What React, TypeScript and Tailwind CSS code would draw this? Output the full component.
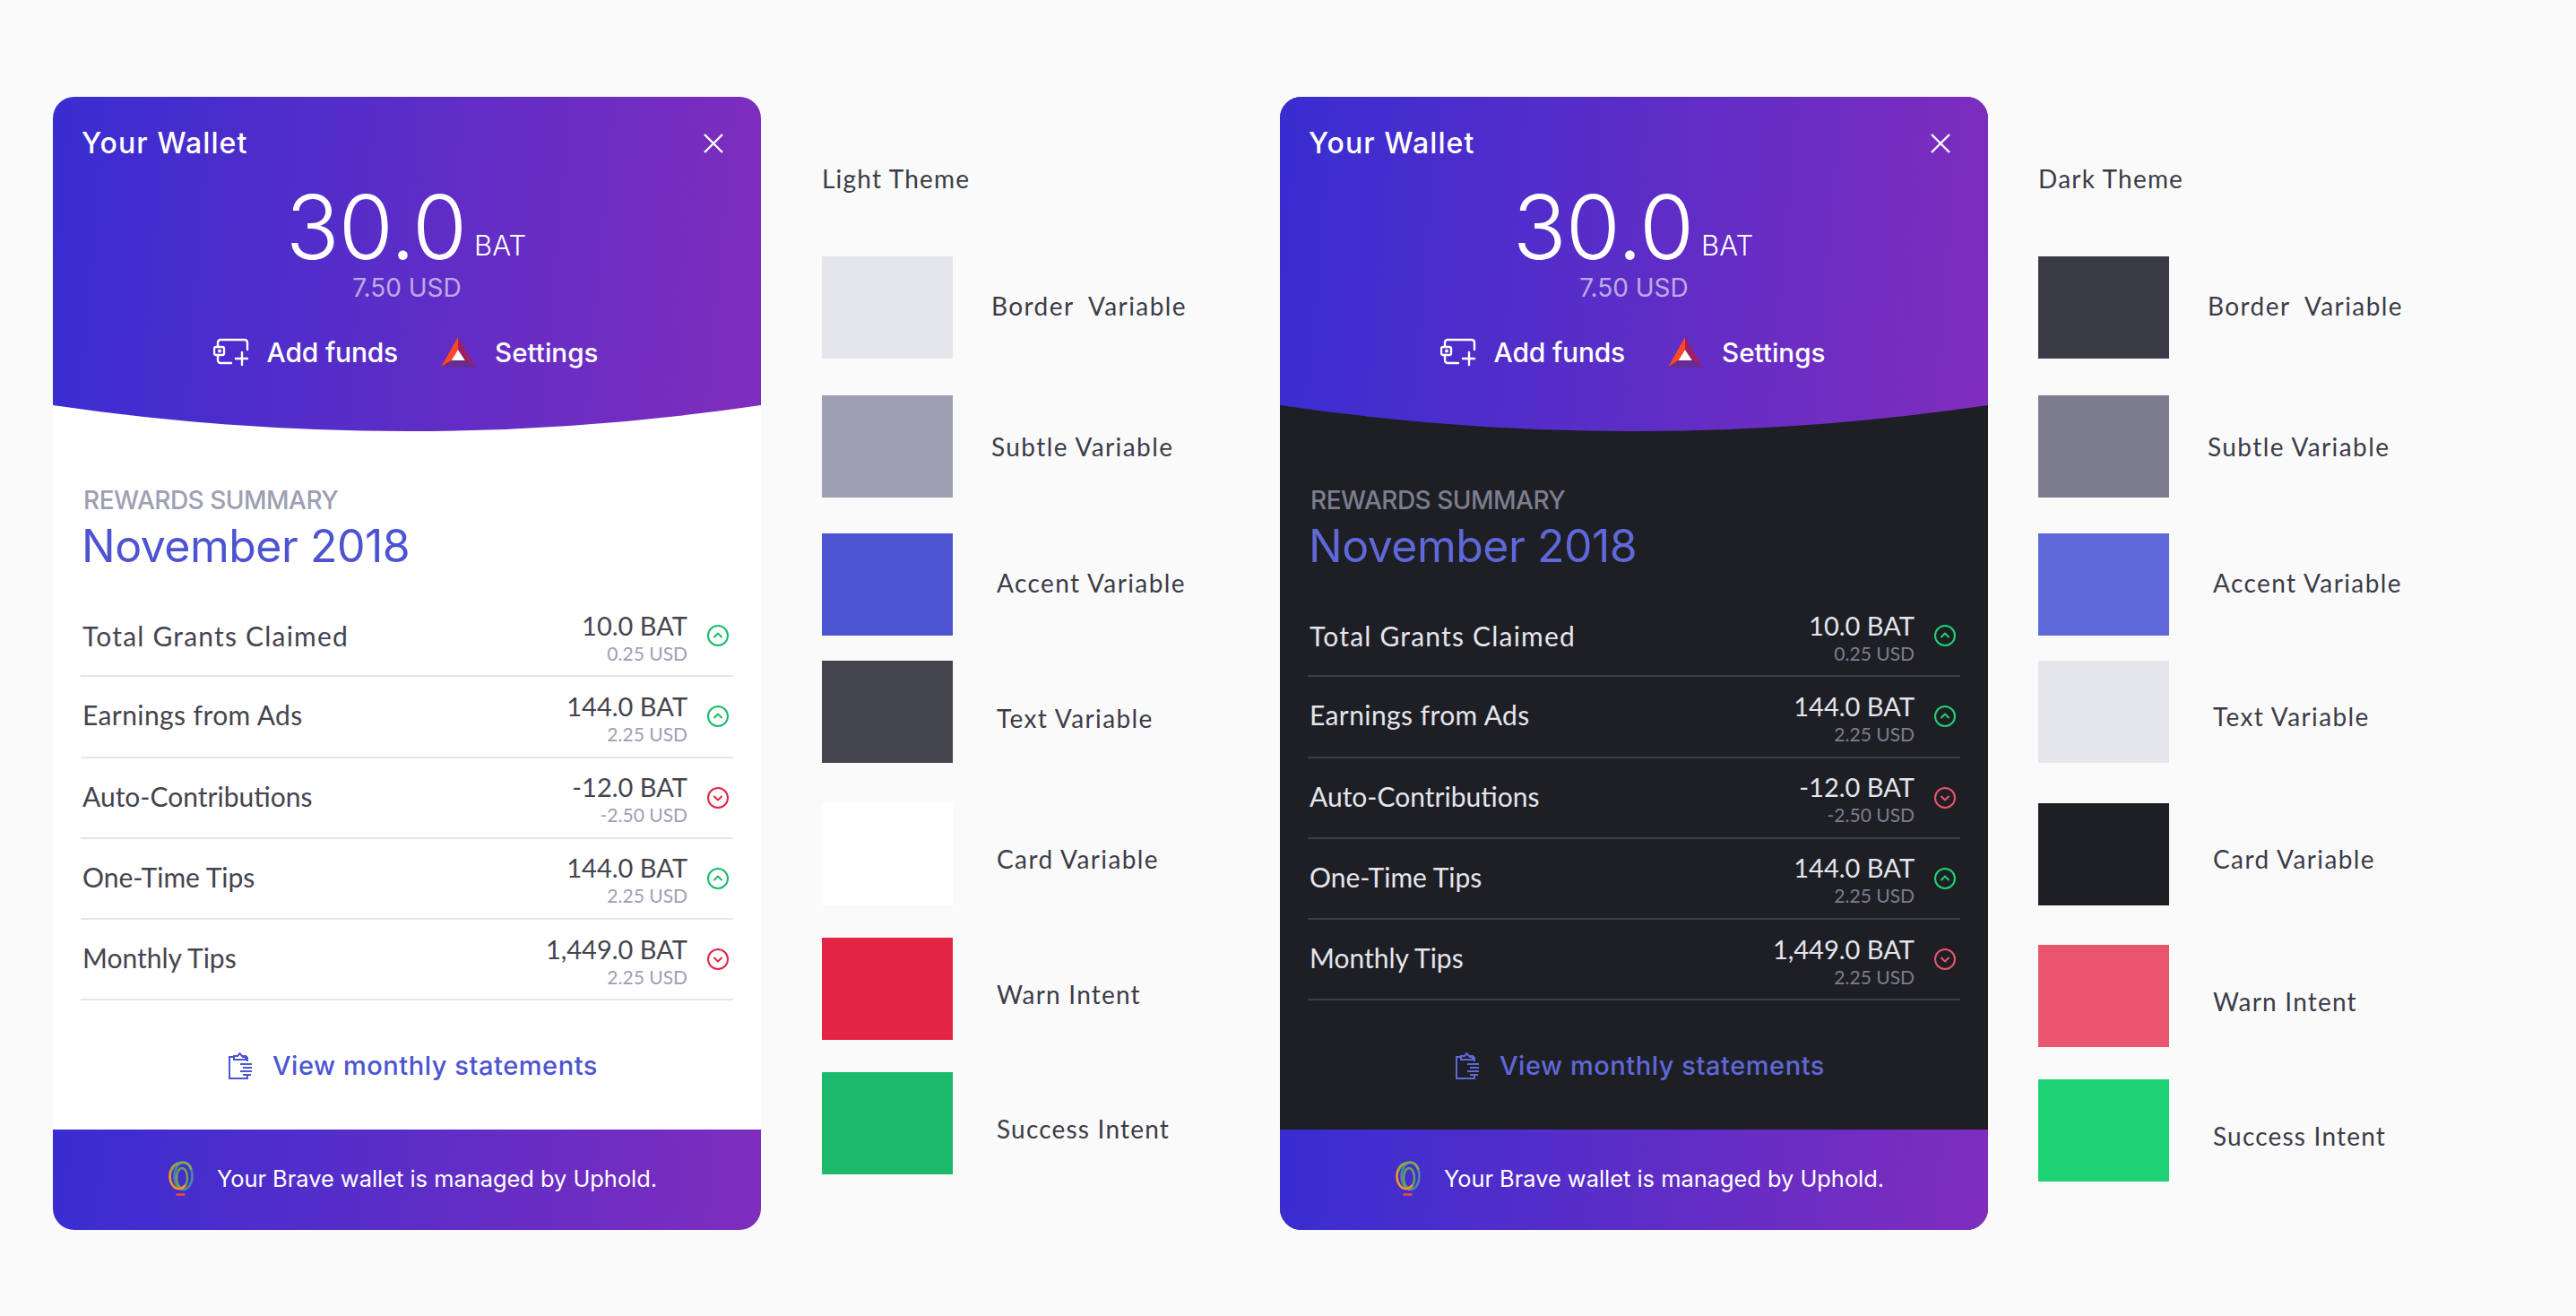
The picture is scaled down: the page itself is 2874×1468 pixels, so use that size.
const HEAD = "font-['Inter','Noto_Sans',sans-serif]";
const BODY = "font-['Lato','Open_Sans',sans-serif]";
const GRADIENT = "bg-[linear-gradient(95deg,#392dd1,#7f2dbd)]";

interface WalletTheme {
  card: string;
  text: string;
  subtle: string;
  accent: string;
  border: string;
  up: string;
  down: string;
}

const lightTheme: WalletTheme = {
  card: "bg-white",
  text: "text-[#44444f]",
  subtle: "text-[#9e9fb3]",
  accent: "text-[#4c54d2]",
  border: "border-[#e5e5ec]",
  up: "text-[#1bba6a]",
  down: "text-[#e32444]",
};

const darkTheme: WalletTheme = {
  card: "bg-[#1e1f25]",
  text: "text-[#e5e5ec]",
  subtle: "text-[#7d7d8f]",
  accent: "text-[#5f68d8]",
  border: "border-[#3b3c46]",
  up: "text-[#1dd376]",
  down: "text-[#e9546e]",
};

const rows = [
  { label: "Total Grants Claimed", bat: "10.0 BAT", usd: "0.25 USD", up: true, labelClass: "tracking-[1.2px]" },
  { label: "Earnings from Ads", bat: "144.0 BAT", usd: "2.25 USD", up: true, labelClass: "tracking-[0.4px] pb-[3px]" },
  { label: "Auto-Contributions", bat: "-12.0 BAT", usd: "-2.50 USD", up: false, labelClass: "pb-[3px]" },
  { label: "One-Time Tips", bat: "144.0 BAT", usd: "2.25 USD", up: true, labelClass: "pb-[3px]" },
  { label: "Monthly Tips", bat: "1,449.0 BAT", usd: "2.25 USD", up: false, labelClass: "pb-[3px]" },
];

const lightSwatches = [
  { name: "Border  Variable", color: "bg-[#e5e5ec]", row: "mt-0", label: "ml-[43px] pt-[35px] tracking-[1.4px]" },
  { name: "Subtle Variable", color: "bg-[#9e9fb3]", row: "mt-[41px]", label: "ml-[43px] pt-[37px] tracking-[1.4px]" },
  { name: "Accent Variable", color: "bg-[#4c54d2]", row: "mt-[40px]", label: "ml-[49px] pt-[35px] tracking-[1.4px]" },
  { name: "Text Variable", color: "bg-[#44444f]", row: "mt-[28px]", label: "ml-[49px] pt-[44px] tracking-[1.4px]" },
  { name: "Card Variable", color: "bg-white", row: "mt-[45px]", label: "ml-[49px] pt-[42px] tracking-[1.4px]" },
  { name: "Warn Intent", color: "bg-[#e32444]", row: "mt-[36px]", label: "ml-[49px] pt-[43px] tracking-[1.2px]" },
  { name: "Success Intent", color: "bg-[#1bba6a]", row: "mt-[36px]", label: "ml-[49px] pt-[43px] tracking-[1.2px]" },
];

const darkSwatches = [
  { name: "Border  Variable", color: "bg-[#393a45]", row: "mt-0", label: "ml-[43px] pt-[35px] tracking-[1.4px]" },
  { name: "Subtle Variable", color: "bg-[#7d7d8f]", row: "mt-[41px]", label: "ml-[43px] pt-[37px] tracking-[1.4px]" },
  { name: "Accent Variable", color: "bg-[#5f68d8]", row: "mt-[40px]", label: "ml-[49px] pt-[35px] tracking-[1.4px]" },
  { name: "Text Variable", color: "bg-[#e5e5ec]", row: "mt-[28px]", label: "ml-[49px] pt-[42px] tracking-[1.4px]" },
  { name: "Card Variable", color: "bg-[#1e1f25]", row: "mt-[45px]", label: "ml-[49px] pt-[42px] tracking-[1.4px]" },
  { name: "Warn Intent", color: "bg-[#e9546e]", row: "mt-[44px]", label: "ml-[49px] pt-[43px] tracking-[1.2px]" },
  { name: "Success Intent", color: "bg-[#1dd376]", row: "mt-[36px]", label: "ml-[49px] pt-[43px] tracking-[1.2px]" },
];

function WalletPlusIcon() {
  return (
    <svg width="40" height="32" viewBox="0 0 40 32" fill="none" stroke="white" strokeWidth="2.4" strokeLinecap="round">
      <path d="M5 10V5a3 3 0 0 1 3-3h27a3 3 0 0 1 3 3v8" />
      <rect x="1" y="10" width="11" height="9" rx="2" />
      <path d="M5 19v6a3 3 0 0 0 3 3h12" />
      <path d="M25 23h13M32 16v14" />
      <circle cx="7" cy="14.5" r="0.8" fill="white" />
    </svg>
  );
}

function BatLogo() {
  return (
    <svg width="39" height="34" viewBox="0 0 39 34">
      <polygon points="19,0 0,33.5 11.7,26 19,14.3" fill="#ff4724" />
      <polygon points="19,0 38.5,33.5 26.7,26 19,14.3" fill="#9e1f63" />
      <polygon points="0,33.5 38.5,33.5 26.7,26 11.7,26" fill="#662d91" />
      <polygon points="19,14.3 11.7,26 26.7,26" fill="white" />
    </svg>
  );
}

function ClipboardIcon() {
  return (
    <svg width="28" height="31" viewBox="0 0 28 31" fill="none" stroke="currentColor" strokeWidth="2">
      <path d="M7 5H2v24h20v-4M22 5v5M16 5h6" />
      <path d="M7 8V4h4l2.5-3L16 4h4v4z" />
      <path d="M14 13h13M17 17h10M14 21h13M17 25h9" />
    </svg>
  );
}

function UpholdLogo() {
  return (
    <svg width="28" height="40" viewBox="0 0 28 40" fill="none" strokeWidth="2.6">
      <ellipse cx="16.5" cy="17" rx="10" ry="15" stroke="#4e87a6" />
      <ellipse cx="15" cy="19" rx="6" ry="11" stroke="#6a9f58" />
      <path d="M11 3C5 4 1.5 10 1.5 17c0 8 4.5 14 10 14 3 0 5-1 7-4" stroke="#f7941e" />
      <path d="M3 11C6 4 11 1.5 16 1.5c4 0 8 3 9.500 8" stroke="#7cb342" />
      <path d="M9.500 37.500h8" stroke="#e8503a" strokeLinecap="round" />
    </svg>
  );
}

function TrendIcon({ up }: { up: boolean }) {
  return (
    <svg width="24" height="24" viewBox="0 0 24 24" fill="none" stroke="currentColor" strokeWidth="2" strokeLinecap="round" strokeLinejoin="round">
      <circle cx="12" cy="12" r="11" />
      <path d={up ? "M8 13.500l4-4 4 4" : "M8 10.500l4 4 4-4"} />
    </svg>
  );
}

function WalletCard({ theme }: { theme: WalletTheme }) {
  return (
    <div className={`flex h-[1264px] w-[790px] shrink-0 flex-col overflow-hidden rounded-[24px] ${theme.card}`}>
      <div className={`h-[373px] shrink-0 text-white ${GRADIENT} ${HEAD} [clip-path:path('M0_0H790V344Q395_402_0_344Z')]`}>
        <div className="flex items-center justify-between pt-[32px] pr-[41px] pl-[32px]">
          <span className="text-[32px] leading-[40px] font-medium tracking-[1.1px]">Your Wallet</span>
          <svg width="24" height="24" viewBox="0 0 24 24" fill="none" stroke="white" strokeWidth="2.4">
            <path d="M2 2l20 20M22 2L2 22" />
          </svg>
        </div>
        <div className="mt-[23px] flex items-baseline justify-center pr-[2px]">
          <span className="text-[99px] leading-[100px] font-light tracking-[-1px]">30.0</span>
          <span className="ml-[9px] -translate-y-[4px] text-[31px] font-light">BAT</span>
        </div>
        <div className="text-center text-[28px] leading-[36px] text-white/60">7.50 USD</div>
        <div className="mt-[34px] flex h-[40px] items-center justify-center pr-[3px]">
          <WalletPlusIcon />
          <span className="ml-[20px] text-[30px] font-medium tracking-[-0.2px]">Add funds</span>
          <span className="ml-[48px]"><BatLogo /></span>
          <span className="ml-[21px] text-[29.6px] font-medium">Settings</span>
        </div>
      </div>

      <div className="flex min-h-0 flex-1 flex-col px-[31px]">
        <div className={`mt-[63px] pl-[3px] text-[28px] leading-[28px] font-medium tracking-[-0.5px] ${theme.subtle} ${HEAD}`}>REWARDS SUMMARY</div>
        <div className={`mt-[9px] pl-[1px] text-[50px] leading-[56px] tracking-[-0.5px] ${theme.accent} ${HEAD}`}>November 2018</div>
        <div className={`mt-[28px] ${BODY}`}>
          {rows.map((row) => (
            <div key={row.label} className={`box-border flex h-[90.25px] items-center justify-between border-b-2 pr-[5px] pl-[2px] ${theme.border}`}>
              <span className={`text-[30px] ${theme.text} ${row.labelClass}`}>{row.label}</span>
              <div className="flex items-center gap-[22px]">
                <div className="pt-[2px] text-right">
                  <div className={`text-[29px] leading-[36px] ${theme.text}`}>{row.bat}</div>
                  <div className={`mt-[1px] text-[21px] leading-[24px] ${theme.subtle}`}>{row.usd}</div>
                </div>
                <span className={row.up ? theme.up : theme.down}>
                  <TrendIcon up={row.up} />
                </span>
              </div>
            </div>
          ))}
        </div>
        <div className={`flex flex-1 items-center justify-center gap-[22px] pt-[2px] pl-[13px] ${theme.accent} ${HEAD}`}>
          <ClipboardIcon />
          <span className="text-[29px] font-medium tracking-[0.55px]">View monthly statements</span>
        </div>
      </div>

      <div className={`flex h-[112px] shrink-0 items-center justify-center gap-[26px] pb-[2px] pl-[13px] text-white ${GRADIENT} ${HEAD}`}>
        <UpholdLogo />
        <span className="text-[25.4px]">Your Brave wallet is managed by Uphold.</span>
      </div>
    </div>
  );
}

function Legend({ title, swatches, className }: { title: string; swatches: typeof lightSwatches; className: string }) {
  return (
    <div className={`${className} shrink-0 pt-[71px] text-[28px] text-[#3c3c48] ${BODY}`}>
      <div className="leading-[40px] tracking-[1.2px]">{title}</div>
      <div className="mt-[67px]">
        {swatches.map((s) => (
          <div key={s.name} className={`flex items-start ${s.row}`}>
            <div className={`h-[114px] w-[146px] shrink-0 ${s.color}`} />
            <div className={`whitespace-pre leading-[40px] ${s.label}`}>{s.name}</div>
          </div>
        ))}
      </div>
    </div>
  );
}

export default function App() {
  return (
    <div className="flex h-[1468px] w-[2874px] overflow-hidden bg-[#fafafa] pt-[108px] pl-[59px]">
      <WalletCard theme={lightTheme} />
      <Legend title="Light Theme" swatches={lightSwatches} className="ml-[68px] w-[511px]" />
      <WalletCard theme={darkTheme} />
      <Legend title="Dark Theme" swatches={darkSwatches} className="ml-[56px] w-[400px]" />
    </div>
  );
}
